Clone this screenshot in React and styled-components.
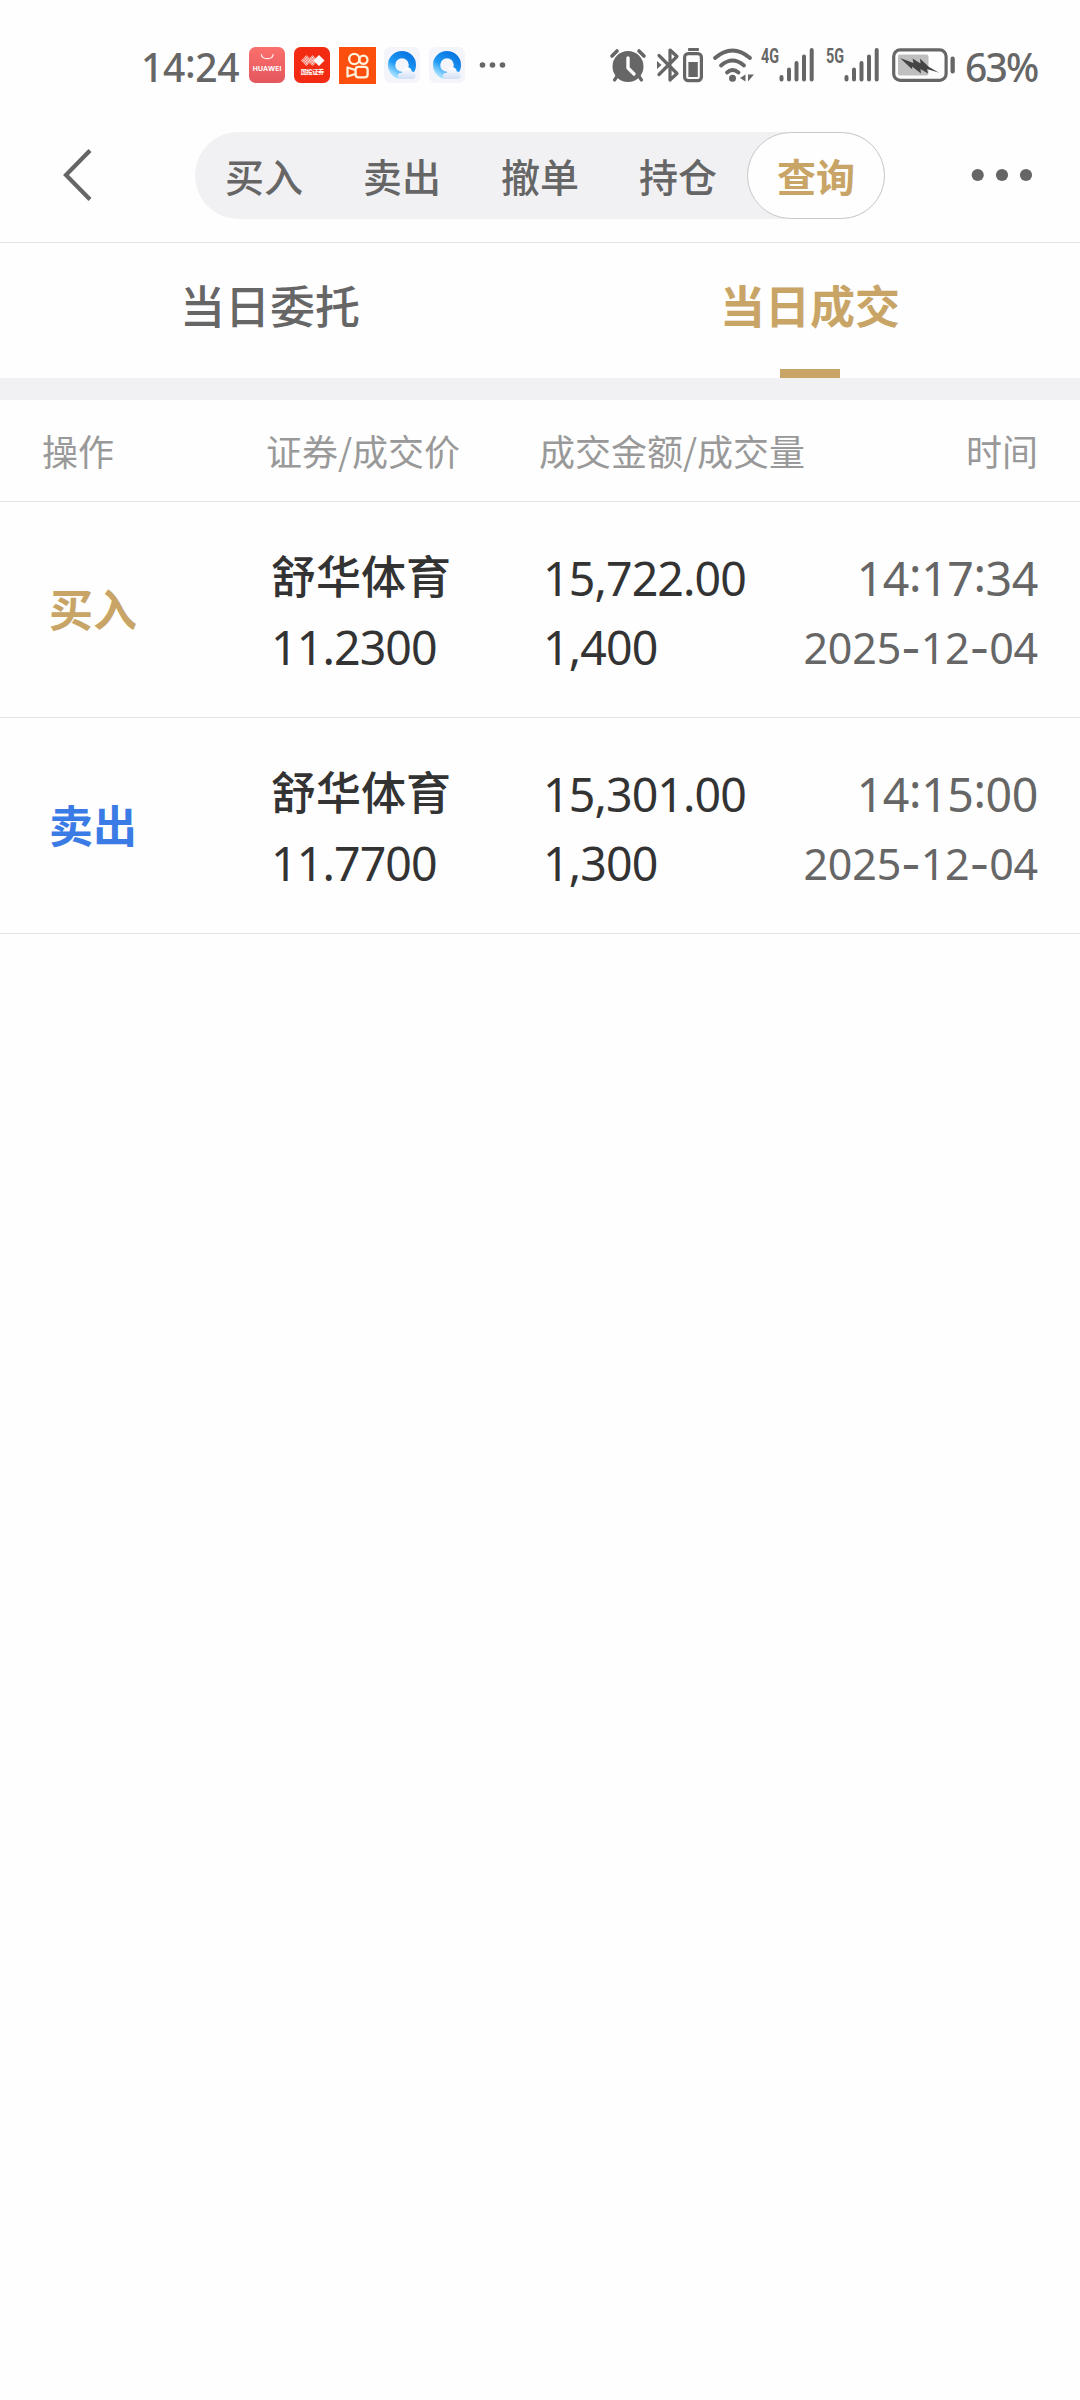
import React from 'react'
import styled, { createGlobalStyle } from 'styled-components'

const GlobalStyle = createGlobalStyle`
  * {
    box-sizing: border-box;
  }

  body {
    margin: 0;
    background: #fefefe;
    font-family: 'Noto Sans CJK SC', sans-serif;
    color: #333;
  }
`

const Page = styled.div`
  width: 1080px;
  min-height: 2400px;
  background: #fefefe;
`

const StatusBar = styled.div`
  display: flex;
  justify-content: space-between;
  height: 132px;
  padding: 42px 42px 0 141px;
  color: #666;
`

const StatusGroup = styled.div`
  display: flex;
  align-items: center;
  height: 46px;
`

const StatusText = styled.span`
  width: ${props => props.width}px;
  margin-left: ${props => props.$gap || 0}px;
  padding-top: 4px;
  font: 500 39px/46px 'Noto Sans', sans-serif;
  letter-spacing: ${props => props.$spacing || 0}px;
  white-space: nowrap;
`

const Colon = styled.span`
  vertical-align: 4px;
  line-height: 0;
`

const Icon = styled.svg`
  display: block;
  flex: none;
  margin-left: ${props => props.$gap || 0}px;
  overflow: visible;
`

const NavBar = styled.div`
  display: flex;
  align-items: flex-start;
  height: 111px;
  padding: 0 48px 0 60px;
  border-bottom: 1px solid #e3e3e5;
`

const Segments = styled.div`
  display: flex;
  width: 690px;
  height: 87px;
  margin: 0 auto 0 101px;
  border-radius: 44px;
  background: #f1f1f4;
`

const Segment = styled.div`
  flex: 1;
  border: 1px solid ${props => (props.$active ? '#c8c8ca' : 'transparent')};
  border-radius: 44px;
  background: ${props => (props.$active ? '#fefefe' : 'transparent')};
  color: ${props => (props.$active ? '#c8a566' : '#666')};
  font-size: 39px;
  font-weight: ${props => (props.$active ? 700 : 500)};
  line-height: 85px;
  text-align: center;
`

const Tabs = styled.div`
  display: flex;
  height: 157px;
  border-bottom: 22px solid #f1f1f4;
`

const Tab = styled.div`
  display: flex;
  flex: 1;
  flex-direction: column;
  align-items: center;
  justify-content: space-between;
  color: ${props => (props.$active ? '#c8a566' : '#666')};
  font-size: 45px;
  font-weight: ${props => (props.$active ? 700 : 500)};
  line-height: 124px;

  &::after {
    content: '';
    width: 60px;
    height: 9px;
    background: ${props => (props.$active ? '#c8a566' : 'transparent')};
  }
`

const TableHead = styled.div`
  display: grid;
  grid-template-columns: 224px 273px 1fr auto;
  height: 102px;
  padding: 0 42px;
  border-bottom: 1px solid #e3e3e5;
  color: #999;
  font-size: 36px;
  line-height: 101px;
`

const Row = styled.div`
  display: grid;
  grid-template-columns: 222px 272px 1fr auto;
  height: 216px;
  padding: 0 42px 0 49px;
  border-bottom: 1px solid #e3e3e5;
`

const Side = styled.div`
  color: ${props => (props.$sell ? '#3b7be6' : '#c8a566')};
  font-size: 44px;
  font-weight: 700;
  line-height: 213px;
`

const Cell = styled.div`
  display: flex;
  flex-direction: column;
  padding-top: 42px;
  color: ${props => (props.$muted ? '#666' : '#333')};
  text-align: ${props => (props.$muted ? 'right' : 'left')};
`

const Name = styled.div`
  height: 69px;
  font-size: 45px;
  font-weight: 500;
  line-height: 62px;
`

const Figure = styled.div`
  height: 69px;
  font: 450 ${props => props.$size || 46.5}px/69px 'Noto Sans', sans-serif;
  letter-spacing: ${props => props.$spacing || -0.9}px;
`

const Dash = styled.span`
  font-family: Inter, sans-serif;
  line-height: 0;
`

const AlarmIcon = () => (
  <Icon width="36" height="34" viewBox="0 0 36 34">
    <path d="M2 8 L7 3 M29 3 L34 8" stroke="#666" strokeWidth="3.6" strokeLinecap="round" />
    <path d="M8 27 L4.5 32 M28 27 L31.5 32" stroke="#666" strokeWidth="3.2" strokeLinecap="round" />
    <circle cx="18" cy="18.5" r="15.5" fill="#666" />
    <path d="M18 10 V20 L24 26" fill="none" stroke="#fefefe" strokeWidth="3.4" strokeLinecap="round" strokeLinejoin="round" />
  </Icon>
)

const BluetoothIcon = () => (
  <Icon $gap={11} width="22" height="36" viewBox="0 0 22 36">
    <path
      d="M2 8.5 L20 26.5 L13 33 V3 L20 9.5 L2 27.5"
      fill="none"
      stroke="#666"
      strokeWidth="3.2"
      strokeLinecap="round"
      strokeLinejoin="round"
    />
    <path d="M0 14 L4.5 18 L0 22 Z" fill="#666" />
  </Icon>
)

const DeviceBatteryIcon = () => (
  <Icon $gap={4} width="20" height="36" viewBox="0 0 20 36">
    <rect x="5" y="1" width="11" height="3" rx="1" fill="#666" />
    <rect x="1.6" y="6.6" width="16.8" height="27" rx="3.6" fill="none" stroke="#666" strokeWidth="3.2" />
    <rect x="5.4" y="15" width="9.4" height="15" fill="#666" />
  </Icon>
)

const WifiIcon = () => (
  <Icon $gap={10} width="41" height="34" viewBox="0 0 41 34">
    <g fill="none" stroke="#666" strokeWidth="3.8" strokeLinecap="round">
      <path d="M2 10 Q19.5 -5 37 10" />
      <path d="M8 17.5 Q19.5 7.5 31 17.5" />
      <path d="M14 24.5 Q19.5 19.5 25.5 24.5" />
    </g>
    <circle cx="19.5" cy="30.2" r="3.5" fill="#666" />
    <path d="M32.5 26.5 V33.5 L27 30 Z M35 26.5 H41 L35 33.5 Z" fill="#666" />
  </Icon>
)

const SignalIcon = ({ label, gap }) => (
  <Icon $gap={gap} width="53" height="34" viewBox="0 0 53 34">
    <text
      x="0"
      y="14.5"
      fill="#666"
      fontFamily="Roboto, sans-serif"
      fontSize="19.5"
      fontWeight="700"
      textLength="18"
      lengthAdjust="spacingAndGlyphs"
    >
      {label}
    </text>
    <path
      d="M20.5 29 V31.5 M28 21.5 V31.5 M35.5 15 V31.5 M43 8.5 V31.5 M50.7 2 V31.5"
      stroke="#666"
      strokeWidth="4"
      strokeLinecap="round"
    />
  </Icon>
)

const BatteryIcon = () => (
  <Icon $gap={13} width="64" height="34" viewBox="0 0 64 34">
    <rect x="1.7" y="1.9" width="52.4" height="30.4" rx="6.5" fill="none" stroke="#666" strokeWidth="3.2" />
    <rect x="6" y="6.5" width="30.5" height="21" rx="2" fill="#bfbfbf" />
    <rect x="58.5" y="8.6" width="4.3" height="17" rx="2.1" fill="#666" />
    <path
      d="M8 10 L21.5 15 L20.5 10.5 L28.5 15.5 L28 10.5 L37 19 L47 24.8 L35 21 L36 25.5 L28.5 21 L29 25.5 L20 18.5 L20.3 21.5 Z"
      fill="#444"
    />
  </Icon>
)

const HuaweiIcon = () => (
  <Icon $gap={9} width="36" height="36" viewBox="0 0 36 36">
    <defs>
      <linearGradient id="huawei" x1="0" y1="0" x2="0" y2="1">
        <stop offset="0" stopColor="#fb6f6c" />
        <stop offset="1" stopColor="#e4575e" />
      </linearGradient>
    </defs>
    <rect width="36" height="36" rx="6.5" fill="url(#huawei)" />
    <path d="M12.3 7.5 C13 13 23.5 13 24.2 7.5" fill="none" stroke="#fff3f0" strokeWidth="1.2" strokeLinecap="round" />
    <text x="3.8" y="23.8" fill="#fff" fontFamily="Inter, sans-serif" fontSize="6.8" fontWeight="700" textLength="28.6">
      HUAWEI
    </text>
  </Icon>
)

const BrokerIcon = () => (
  <Icon $gap={9} width="36" height="36" viewBox="0 0 36 36">
    <defs>
      <pattern id="mesh" width="2" height="2" patternUnits="userSpaceOnUse" patternTransform="rotate(45)">
        <rect width="1.5" height="1.5" fill="#fff" />
      </pattern>
    </defs>
    <rect width="36" height="36" rx="6.5" fill="#f22b12" />
    <path d="M12.5 8 L18 13.5 L12.5 19 L7 13.5 Z M18.5 8 L24 13.5 L18.5 19 L13 13.5 Z" fill="url(#mesh)" />
    <path d="M25 8 L30.5 13.5 L25 19 L19.5 13.5 Z" fill="#fff" />
    <text
      x="6.8"
      y="27"
      fill="#fff"
      fontFamily="'Noto Sans CJK SC', sans-serif"
      fontSize="6.2"
      fontWeight="700"
      textLength="23.5"
    >
      国投证券
    </text>
  </Icon>
)

const KuaishouIcon = () => (
  <Icon $gap={9} width="37" height="37" viewBox="0 0 37 37">
    <rect width="37" height="37" fill="#fc4e0d" />
    <g fill="none" stroke="#fff1dc" strokeWidth="2.3">
      <circle cx="15.3" cy="12" r="5.1" />
      <circle cx="24.4" cy="12.8" r="4.1" />
      <rect x="16.6" y="19.8" width="12" height="10.6" rx="2.8" />
      <path d="M16.2 23 L8.5 20.5 V29.5 L16.2 27" strokeLinejoin="round" />
    </g>
  </Icon>
)

const BrowserIcon = ({ id, gap }) => (
  <Icon $gap={gap} width="36" height="36" viewBox="0 0 36 36">
    <defs>
      <linearGradient id={`${id}-ring`} x1="0.8" y1="0" x2="0.2" y2="1">
        <stop offset="0" stopColor="#0b78e3" />
        <stop offset="0.6" stopColor="#1f9bf5" />
        <stop offset="1" stopColor="#9bdcff" />
      </linearGradient>
      <linearGradient id={`${id}-cloud`} x1="0" y1="0" x2="0" y2="1">
        <stop offset="0" stopColor="#ffffff" />
        <stop offset="1" stopColor="#d3dff5" />
      </linearGradient>
    </defs>
    <rect width="36" height="36" rx="6.5" fill="#f3f5fb" />
    <circle cx="18" cy="18" r="10.4" fill="none" stroke={`url(#${id}-ring)`} strokeWidth="7.2" />
    <path
      d="M17.5 32 C12.5 32 12.5 25.5 18 25.8 C18.5 19 27 18.5 27.8 24.4 C32 24 33.5 31.5 28.5 32 Z"
      fill={`url(#${id}-cloud)`}
    />
  </Icon>
)

const MoreNoticesIcon = () => (
  <Icon $gap={14} width="27" height="8" viewBox="0 0 27 8" fill="#666">
    <circle cx="3.5" cy="4" r="2.8" />
    <circle cx="13.5" cy="4" r="2.8" />
    <circle cx="23.5" cy="4" r="2.8" />
  </Icon>
)

const BackIcon = () => (
  <Icon width="34" height="87" viewBox="0 0 34 87">
    <path d="M30 18.5 L6 43 L30 67.5" fill="none" stroke="#666" strokeWidth="4.2" />
  </Icon>
)

const MoreIcon = () => (
  <Icon width="62" height="87" viewBox="0 0 62 87" fill="#666">
    <circle cx="7.7" cy="43" r="6.1" />
    <circle cx="32" cy="43" r="6.1" />
    <circle cx="56" cy="43" r="6.1" />
  </Icon>
)

const splitWith = (text, mark, Mark) =>
  text.split(mark).map((part, i) => (
    <React.Fragment key={i}>
      {i > 0 && <Mark>{mark}</Mark>}
      {part}
    </React.Fragment>
  ))

const segments = ['买入', '卖出', '撤单', '持仓', '查询']

const deals = [
  { side: '买入', name: '舒华体育', price: '11.2300', amount: '15,722.00', volume: '1,400', time: '14:17:34', date: '2025-12-04' },
  { side: '卖出', name: '舒华体育', price: '11.7700', amount: '15,301.00', volume: '1,300', time: '14:15:00', date: '2025-12-04' },
]

const App = () => (
  <Page>
    <GlobalStyle />

    <StatusBar>
      <StatusGroup>
        <StatusText width={99} $spacing={-0.3}>{splitWith('14:24', ':', Colon)}</StatusText>
        <HuaweiIcon />
        <BrokerIcon />
        <KuaishouIcon />
        <BrowserIcon id="browser-a" gap={8} />
        <BrowserIcon id="browser-b" gap={9} />
        <MoreNoticesIcon />
      </StatusGroup>
      <StatusGroup>
        <AlarmIcon />
        <BluetoothIcon />
        <DeviceBatteryIcon />
        <WifiIcon />
        <SignalIcon label="4G" gap={7} />
        <SignalIcon label="5G" gap={12} />
        <BatteryIcon />
        <StatusText width={73} $gap={9} $spacing={-1.8}>63%</StatusText>
      </StatusGroup>
    </StatusBar>

    <NavBar>
      <BackIcon />
      <Segments>
        {segments.map(label => (
          <Segment key={label} $active={label === '查询'}>
            {label}
          </Segment>
        ))}
      </Segments>
      <MoreIcon />
    </NavBar>

    <Tabs>
      <Tab>当日委托</Tab>
      <Tab $active>当日成交</Tab>
    </Tabs>

    <TableHead>
      <span>操作</span>
      <span>证券/成交价</span>
      <span>成交金额/成交量</span>
      <span>时间</span>
    </TableHead>

    {deals.map(deal => (
      <Row key={deal.time}>
        <Side $sell={deal.side === '卖出'}>{deal.side}</Side>
        <Cell>
          <Name>{deal.name}</Name>
          <Figure>{deal.price}</Figure>
        </Cell>
        <Cell>
          <Figure>{deal.amount}</Figure>
          <Figure>{deal.volume}</Figure>
        </Cell>
        <Cell $muted>
          <Figure $spacing={-0.4}>{splitWith(deal.time, ':', Colon)}</Figure>
          <Figure $size={43} $spacing={-0.2}>{splitWith(deal.date, '-', Dash)}</Figure>
        </Cell>
      </Row>
    ))}
  </Page>
)

export default App
